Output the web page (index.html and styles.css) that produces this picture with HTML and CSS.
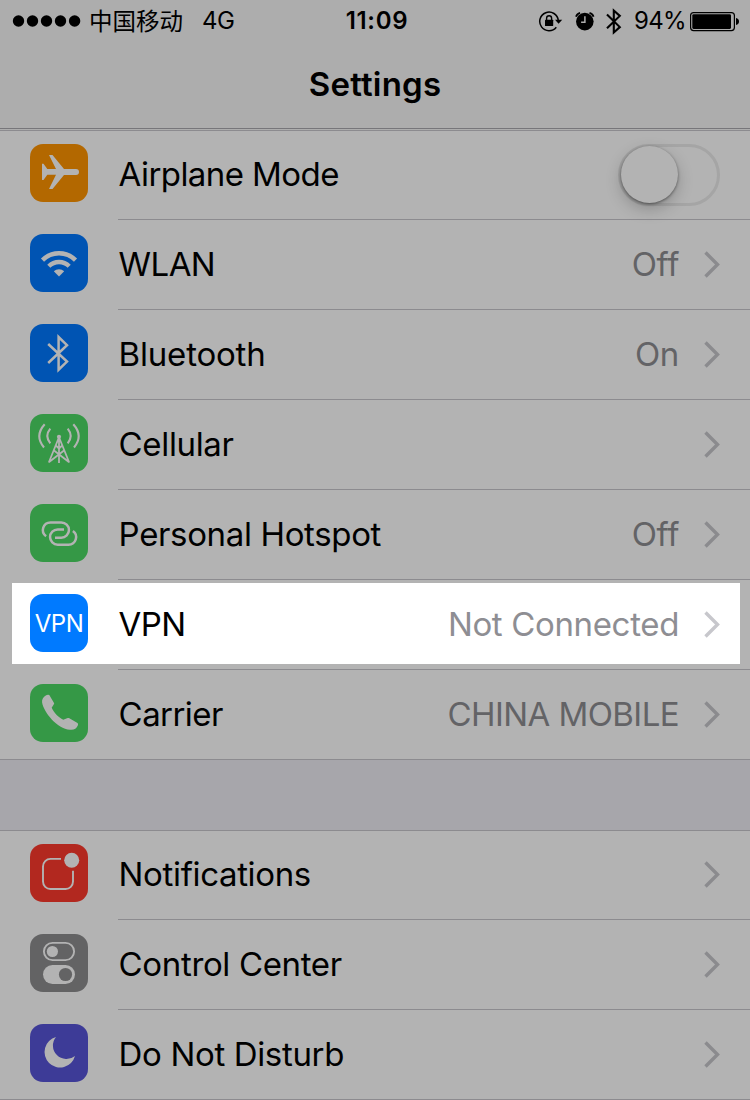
FILE: index.html
```html
<!DOCTYPE html>
<html lang="en">
<head>
<meta charset="utf-8">
<title>Settings</title>
<link rel="stylesheet" href="styles.css">
</head>
<body>
<header class="header">
  <div class="status">
    <div class="status-left">
      <svg width="70" height="14" viewBox="0 0 70 14"><circle cx="6.5" cy="7" r="5.7"/><circle cx="20.5" cy="7" r="5.7"/><circle cx="34.5" cy="7" r="5.7"/><circle cx="48.5" cy="7" r="5.7"/><circle cx="62.6" cy="7" r="5.7"/></svg>
      <span class="operator">中国移动</span>
      <span class="network">4G</span>
    </div>
    <div class="clock">11:09</div>
    <div class="status-right">
      <svg class="lock" width="26" height="28" viewBox="538 6 26 28"><path d="M556.3 26.2A9.3 9.3 0 1 1 558.3 19.5" fill="none" stroke="#000" stroke-width="1.5"/><path d="M555 18.8h7.2l-3.6 4z"/><rect x="545" y="18.7" width="8.2" height="6.4" rx=".6"/><path d="M546.6 19v-1.8a2.5 2.5 0 0 1 5 0V19" fill="none" stroke="#000" stroke-width="1.4"/></svg>
      <svg class="alarm" width="22" height="28" viewBox="573.5 6 22 28"><circle cx="584.3" cy="20.6" r="8.8"/><path d="M575.6 15.8q.6-3 4-4M593 15.8q-.6-3-4-4" fill="none" stroke="#000" stroke-width="1.8"/><path d="M584.4 15.2v6.1h-3.8" fill="none" stroke="#adadad" stroke-width="1.5"/></svg>
      <svg class="bt" width="18" height="28" viewBox="605 6 18 28"><path d="M607 13.5l12.8 12.6-6 5.4V9.5l6 5.400L607 27.300" fill="none" stroke="#000" stroke-width="2.1"/></svg>
      <span class="percent">94%</span>
      <svg width="50" height="28" viewBox="690 6 50 28"><rect x="690.6" y="11.6" width="43.8" height="18" rx="3" fill="none" stroke="#000" stroke-width="1.2"/><rect x="692.3" y="13.3" width="38.7" height="14.6" rx="1.3"/><path d="M736 17q3 .8 3 3.5t-3 3.5z"/></svg>
    </div>
  </div>
  <h1 class="title">Settings</h1>
</header>
<main>
  <ul class="group">
    <li class="row">
      <svg class="icon orange" viewBox="0 0 58 58"><path d="M12 19.7h1.5L17.3 25H26L19 11h3.5L34 25h12a3 3 0 0 1 0 6H34L22.5 45H19l7-14.2h-8.7L13.5 36H12z"/></svg>
      <div class="cell"><span class="label tight">Airplane Mode</span><span class="switch"><span class="knob"></span></span></div>
    </li>
    <li class="row">
      <svg class="icon blue" viewBox="0 0 58 58"><g class="line" stroke-width="4.4"><path d="M12.5 26.1a23.3 23.3 0 0 1 33 0"/><path d="M18.8 32.2a14.4 14.4 0 0 1 20.4 0"/></g><path d="M23.8 37.3a7.4 7.4 0 0 1 10.4 0L29 42.6z"/></svg>
      <div class="cell"><span class="label tight">WLAN</span><span class="value">Off</span><svg class="chevron" viewBox="0 0 16 27"><path d="M1.5 1.5 13.5 13.5 1.5 25.5"/></svg></div>
    </li>
    <li class="row">
      <svg class="icon blue" viewBox="0 0 58 58"><path class="line" stroke-width="2.5" d="M18.2 20 37 37.6 28.6 45.7V13L37 21.2 18.2 39"/></svg>
      <div class="cell"><span class="label loose">Bluetooth</span><span class="value">On</span><svg class="chevron" viewBox="0 0 16 27"><path d="M1.5 1.5 13.5 13.5 1.5 25.5"/></svg></div>
    </li>
    <li class="row">
      <svg class="icon green" viewBox="0 0 58 58"><circle cx="29" cy="22.8" r="2.1"/><g class="line" stroke-width="1.8"><path d="M29 23v26M28.7 24 18.8 48.5M29.3 24l9.900 24.500M18.8 48.3 34 36.5M39.2 48.3 24 36.5M25.8 31.5l3.2 3 3.2-3"/><path d="M14.7 10.3q-10.4 11.5-.7 23.2M43.3 10.3q10.4 11.5.7 23.2M20.3 14.7q-6 7.3 0 14.6M37.7 14.7q6 7.3 0 14.6" stroke-width="2.1"/></g></svg>
      <div class="cell"><span class="label">Cellular</span><svg class="chevron" viewBox="0 0 16 27"><path d="M1.5 1.5 13.5 13.5 1.5 25.5"/></svg></div>
    </li>
    <li class="row">
      <svg class="icon green" viewBox="0 0 58 58"><g class="line" stroke-width="2.5"><path d="M25 33.7h6.3a7.6 7.6 0 0 0 0-15.3H20.5a7.6 7.6 0 0 0-4.4 13.8"/><path d="M34 25.4h-6.3a7.6 7.6 0 0 0 0 15.3h10.8a7.6 7.6 0 0 0 4.4-13.8"/></g></svg>
      <div class="cell"><span class="label">Personal Hotspot</span><span class="value">Off</span><svg class="chevron" viewBox="0 0 16 27"><path d="M1.5 1.5 13.5 13.5 1.5 25.5"/></svg></div>
    </li>
    <li class="row active">
      <div class="icon vpn">VPN</div>
      <div class="cell"><span class="label tight">VPN</span><span class="value">Not Connected</span><svg class="chevron" viewBox="0 0 16 27"><path d="M1.5 1.5 13.5 13.5 1.5 25.5"/></svg></div>
    </li>
    <li class="row">
      <svg class="icon green" viewBox="0 0 58 58"><path d="M15 11.9q3-1.8 4.3-.8L24 19q.3.6 0 1l-2.3 3.7c2 4.8 6.8 9.8 11.6 12l4.4-1.7q.7-.2 1.2.1l8.6 5q1 .8.4 2.2c-1.4 3.6-3.9 4.9-7.9 4.5C27 44.5 13.8 28.5 12.1 18.5c-.4-2.7 1-5.4 2.900-6.600z"/></svg>
      <div class="cell"><span class="label tight">Carrier</span><span class="value tight">CHINA MOBILE</span><svg class="chevron" viewBox="0 0 16 27"><path d="M1.5 1.5 13.5 13.5 1.5 25.5"/></svg></div>
    </li>
  </ul>
  <ul class="group">
    <li class="row">
      <svg class="icon red" viewBox="0 0 58 58"><path class="line" stroke-width="1.9" d="M31 14.9H20.5a7.5 7.5 0 0 0-7.5 7.5V37.5a7.5 7.5 0 0 0 7.5 7.5H35.5a7.5 7.5 0 0 0 7.5-7.5V26.7"/><circle cx="41.7" cy="16.3" r="7.5"/></svg>
      <div class="cell"><span class="label">Notifications</span><svg class="chevron" viewBox="0 0 16 27"><path d="M1.5 1.5 13.5 13.5 1.5 25.5"/></svg></div>
    </li>
    <li class="row">
      <svg class="icon gray" viewBox="0 0 58 58"><rect class="line" x="13.9" y="8.9" width="30.2" height="17.2" rx="8.6" stroke-width="1.9"/><circle cx="22.4" cy="17.5" r="5.6"/><rect x="13" y="31" width="32" height="19" rx="9.5"/><circle cx="35.5" cy="40.5" r="6.6" fill="#636364"/></svg>
      <div class="cell"><span class="label">Control Center</span><svg class="chevron" viewBox="0 0 16 27"><path d="M1.5 1.5 13.5 13.5 1.5 25.5"/></svg></div>
    </li>
    <li class="row">
      <svg class="icon purple" viewBox="0 0 58 58"><path d="M26 13a15.5 15.5 0 1 0 19 19A13.5 13.5 0 0 1 26 13z"/></svg>
      <div class="cell"><span class="label">Do Not Disturb</span><svg class="chevron" viewBox="0 0 16 27"><path d="M1.5 1.5 13.5 13.5 1.5 25.5"/></svg></div>
    </li>
  </ul>
</main>
</body>
</html>
```
FILE: styles.css
```css
* { box-sizing: border-box; }
body {
  margin: 0;
  width: 750px;
  background: #a7a6ab;
  color: #000;
  font-family: Inter, "Noto Sans CJK SC", sans-serif;
}
.header {
  height: 130px;
  background: #adadad;
  border-bottom: 1px solid #adadad;
  box-shadow: inset 0 -1px #77767a;
}
.status {
  display: grid;
  grid-template-columns: 1fr auto 1fr;
  height: 41px;
  align-items: center;
  padding: 0 10px 0 12px;
  font-size: 24px;
}
.status-left, .status-right { display: flex; align-items: center; }
.status-right { justify-content: flex-end; }
.status svg { flex: none; }
.operator {
  margin: -2px 0 0 7px;
  font: 23.5px "Noto Sans CJK SC", sans-serif;
}
.network { margin-left: 19px; letter-spacing: -0.4px; }
.clock {
  padding-left: 2px;
  font-weight: 600;
  letter-spacing: 0.7px;
}
.lock { margin-right: 9.5px; }
.alarm { margin-right: 9.5px; }
.bt { margin-right: 11px; }
.percent { width: 56px; letter-spacing: -0.7px; }
.title {
  margin: 0;
  height: 88px;
  line-height: 86px;
  text-align: center;
  font-size: 33px;
  font-weight: 600;
  letter-spacing: 0.2px;
}
.group {
  list-style: none;
  margin: 0;
  padding: 0;
  background: #b3b3b3;
  box-shadow: inset 0 1px #8c8b8f, inset 0 -1px #8c8b8f;
}
.group + .group { margin-top: 70px; }
.row {
  position: relative;
  display: flex;
  height: 90px;
  padding-left: 30px;
}
.icon {
  display: block;
  flex: none;
  width: 58px;
  height: 58px;
  margin-top: 14px;
  border-radius: 13px;
  fill: #b3b3b3;
}
.line { fill: none; stroke: #b3b3b3; }
.orange { background: #b36800; }
.blue { background: #0054b3; }
.green { background: #359846; }
.red { background: #b2281f; }
.gray { background: #636364; }
.purple { background: #3d3b97; }
.cell {
  display: flex;
  flex: 1;
  align-items: center;
  margin-left: 30px;
  padding-right: 30px;
  border-bottom: 1px solid #8c8b8f;
  font-size: 33px;
}
.label, .value { margin-top: -2px; letter-spacing: -0.35px; }
.label { margin-right: auto; padding-left: 0.6px; }
.tight { letter-spacing: -0.57px; }
.loose { letter-spacing: -0.2px; }
.value { color: #636366; }
.chevron {
  width: 16px;
  height: 27px;
  margin-left: 25px;
  fill: none;
  stroke: #8b8b8e;
  stroke-width: 3.4;
}
.switch {
  width: 102px;
  height: 62px;
  border: 3px solid #a5a5a5;
  border-radius: 31px;
}
.knob {
  display: block;
  width: 57px;
  height: 57px;
  margin-top: -0.5px;
  border-radius: 50%;
  background: #b3b3b3;
  box-shadow: 0 6px 16px rgba(0,0,0,.22), 0 1px 3px rgba(0,0,0,.45);
}
.active::before {
  content: "";
  position: absolute;
  inset: 3px 10px 6px 12px;
  background: #fff;
}
.active > * { position: relative; }
.active .value { color: #8e8e93; }
.active .chevron { stroke: #c7c7cc; }
.vpn {
  display: flex;
  justify-content: center;
  align-items: center;
  background: #007aff;
  color: #fff;
  font-size: 24px;
  letter-spacing: -0.5px;
}
```
